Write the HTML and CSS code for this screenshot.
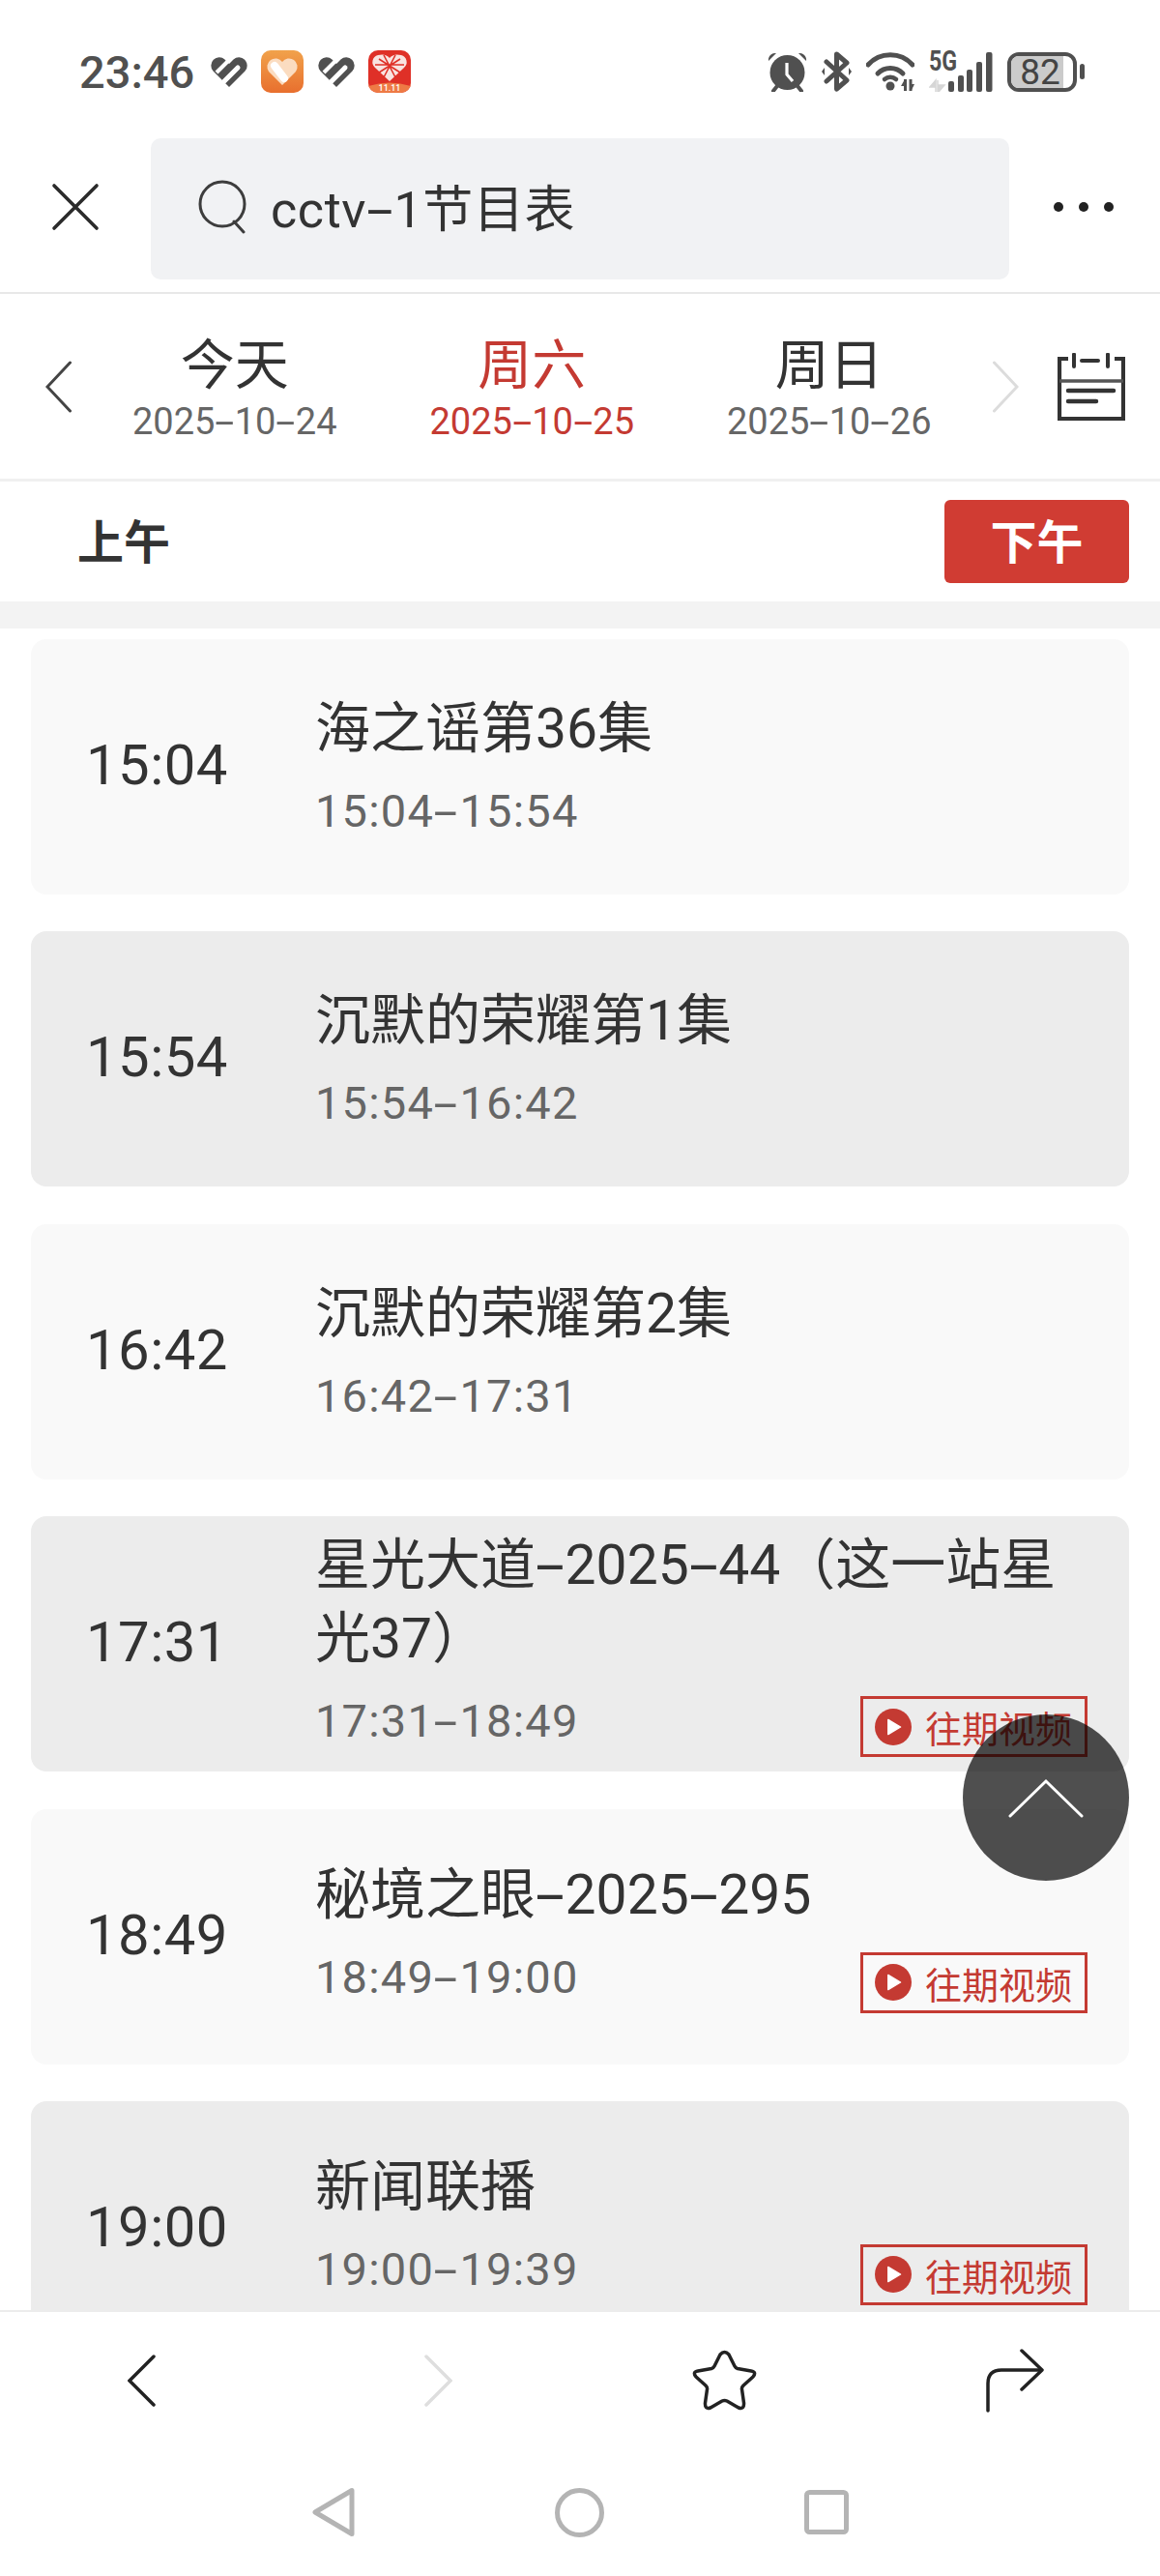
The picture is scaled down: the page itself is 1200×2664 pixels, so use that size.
FILE: index.html
```html
<!DOCTYPE html>
<html lang="zh-CN">
<head>
    <meta charset="UTF-8">
    <meta name="viewport" content="width=device-width, initial-scale=1.0">
    <title>cctv-1节目表</title>
    <link rel="stylesheet" href="styles.css">
</head>
<body>
<div class="phone">

    <div class="status-bar">
        <div class="status-left">
            <span class="clock">23:46</span>
            <svg class="heart" width="38" height="32" viewBox="0 0 38 32"><path d="M19 32 L2.5 15.5 A8.5 8.5 0 0 1 14.5 3.5 L19 8 L23.5 3.5 A8.5 8.5 0 0 1 35.5 15.5 Z" fill="#505050"/><path d="M6 17 L22 1" stroke="#fff" stroke-width="4"/><path d="M14 26 L28 12" stroke="#fff" stroke-width="5" stroke-linecap="round"/></svg>
            <svg class="app" width="44" height="44" viewBox="0 0 44 44"><defs><linearGradient id="og" x1="0" y1="0" x2="0" y2="1"><stop offset="0" stop-color="#f1a24b"/><stop offset="1" stop-color="#e86f2e"/></linearGradient></defs><rect width="44" height="44" rx="10" fill="url(#og)"/><path d="M22 36 L8 22 A8 8 0 0 1 22 12 A8 8 0 0 1 36 22 Z" fill="#fbdcc0"/><path d="M14 16 L24 29" stroke="#fff" stroke-width="8" stroke-linecap="round"/></svg>
            <svg class="heart" width="38" height="32" viewBox="0 0 38 32"><path d="M19 32 L2.5 15.5 A8.5 8.5 0 0 1 14.5 3.5 L19 8 L23.5 3.5 A8.5 8.5 0 0 1 35.5 15.5 Z" fill="#505050"/><path d="M6 17 L22 1" stroke="#fff" stroke-width="4"/><path d="M14 26 L28 12" stroke="#fff" stroke-width="5" stroke-linecap="round"/></svg>
            <svg class="app" width="44" height="44" viewBox="0 0 44 44"><rect width="44" height="44" rx="10" fill="#df3027"/><path d="M0 37 Q22 30 44 37 V34 A10 10 0 0 1 34 44 H10 A10 10 0 0 1 0 34Z" fill="#ee7a45"/><path d="M22 32 L7 18 A7.5 7.5 0 0 1 10 5 Q18 3 22 8 Q26 3 34 5 A7.5 7.5 0 0 1 37 18 Z" fill="#f9e3e0"/><path d="M11 9 L33 23 M33 9 L11 23 M16 5 L28 28 M28 5 L16 28 M7 15 H37" stroke="#df3027" stroke-width="1.6"/><text x="22" y="42" class="app-text" text-anchor="middle">11.11</text></svg>
        </div>
        <div class="status-right">
            <svg width="41" height="41" viewBox="0 0 41 41"><path d="M1 9 A7 7 0 0 1 9 1 Z M40 9 A7 7 0 0 0 32 1 Z" fill="#505050"/><circle cx="20.5" cy="21" r="18" fill="#505050"/><path d="M20 11 V23 L26 30" stroke="#fff" stroke-width="3.2" fill="none"/><path d="M6 40 L10 35 M35 40 L31 35" stroke="#505050" stroke-width="4" stroke-linecap="round"/></svg>
            <svg width="31" height="42" viewBox="0 0 31 42"><path d="M5 11 L26 30 L15.5 39 V3 L26 12 L5 31" stroke="#505050" stroke-width="5" fill="none" stroke-linejoin="round" stroke-linecap="round"/><path d="M0 21 L3 17 V25 Z M31 21 L28 17 V25 Z" fill="#505050"/></svg>
            <svg width="50" height="41" viewBox="0 0 50 41"><path d="M2 13 A31 31 0 0 1 48 13" stroke="#505050" stroke-width="5" fill="none" stroke-linecap="round"/><path d="M12 22 A18 18 0 0 1 38 22" stroke="#505050" stroke-width="5" fill="none" stroke-linecap="round"/><path d="M19 28 A9 9 0 0 1 31 28" stroke="#505050" stroke-width="4.5" fill="none" stroke-linecap="round"/><circle cx="25" cy="35" r="4.5" fill="#505050"/><path d="M40.5 28 V40 M46 28 V40" stroke="#505050" stroke-width="3"/><path d="M40 28 L36 35 H40 Z M46.5 40 L50 33 H46.5 Z" fill="#505050"/></svg>
            <div class="signal">
                <span class="net">5G</span>
                <svg width="66" height="42" viewBox="0 0 66 42"><path d="M7 30 L1 37 H7 Z M9 30 V42 M10 42 L16 35 H10 Z M7 37 V42" stroke="#d6d6d6" stroke-width="1.5" fill="#d6d6d6"/><rect x="20" y="31" width="6" height="11" rx="2" fill="#505050"/><rect x="30" y="25" width="6" height="17" rx="2" fill="#505050"/><rect x="39" y="19" width="6" height="23" rx="2" fill="#505050"/><rect x="49" y="11" width="6" height="31" rx="2" fill="#505050"/><rect x="59" y="1" width="6.5" height="41" rx="2" fill="#505050"/></svg>
            </div>
            <div class="battery-wrap">
                <div class="battery"><div class="batt-level"></div><span class="batt-num">82</span></div>
                <div class="batt-tip"></div>
            </div>
        </div>
    </div>

    <div class="search-row">
        <svg class="close-icon" width="50" height="50" viewBox="0 0 50 50"><path d="M3 3 L47 47 M47 3 L3 47" stroke="#2b2b2b" stroke-width="3.6" stroke-linecap="round"/></svg>
        <div class="search-box">
            <svg width="50" height="56" viewBox="0 0 50 56"><circle cx="25" cy="25" r="23" stroke="#3d3d3d" stroke-width="3" fill="none"/><path d="M37 43 L47 54" stroke="#3d3d3d" stroke-width="3" stroke-linecap="round"/></svg>
            <span class="search-text">cctv<span class="hy">-</span>1节目表</span>
        </div>
        <div class="more"><i></i><i></i><i></i></div>
    </div>

    <div class="date-row">
        <svg class="date-prev" width="27" height="54" viewBox="0 0 27 54"><path d="M25.5 2 L2 27 L25.5 52" stroke="#444" stroke-width="3" fill="none" stroke-linecap="round"/></svg>
        <div class="date-item">
            <div class="date-name">今天</div>
            <div class="date-num">2025<span class="hy">-</span>10<span class="hy">-</span>24</div>
        </div>
        <div class="date-item active">
            <div class="date-name">周六</div>
            <div class="date-num">2025<span class="hy">-</span>10<span class="hy">-</span>25</div>
        </div>
        <div class="date-item">
            <div class="date-name">周日</div>
            <div class="date-num">2025<span class="hy">-</span>10<span class="hy">-</span>26</div>
        </div>
        <svg class="date-next" width="27" height="54" viewBox="0 0 27 54"><path d="M1.5 2 L25 27 L1.5 52" stroke="#dcdcdc" stroke-width="3" fill="none" stroke-linecap="round"/></svg>
        <svg class="calendar" width="70" height="70" viewBox="0 0 70 70"><path d="M11 6 H2 V68 H68 V6 H59" stroke="#333" stroke-width="4.2" fill="none"/><path d="M17 1.5 V14 M52 1.5 V14" stroke="#333" stroke-width="4" stroke-linecap="round"/><path d="M25 8 H42" stroke="#333" stroke-width="4" stroke-linecap="round"/><path d="M2 29 H68" stroke="#555" stroke-width="3.5"/><path d="M11 39 H58 M11 50 H40" stroke="#333" stroke-width="4.5" stroke-linecap="round"/></svg>
    </div>

    <div class="period-row">
        <span class="period">上午</span>
        <span class="period-btn"><span>下午</span></span>
    </div>
    <div class="gray-bar"></div>

    <div class="program-list">
        <div class="program">
            <div class="start">15:04</div>
            <div class="info">
                <div class="title">海之谣第36集</div>
                <div class="range-row">
                    <div class="range">15:04<span class="hy">-</span>15:54</div>
                </div>
            </div>
        </div>
        <div class="program alt">
            <div class="start">15:54</div>
            <div class="info">
                <div class="title">沉默的荣耀第1集</div>
                <div class="range-row">
                    <div class="range">15:54<span class="hy">-</span>16:42</div>
                </div>
            </div>
        </div>
        <div class="program">
            <div class="start">16:42</div>
            <div class="info">
                <div class="title">沉默的荣耀第2集</div>
                <div class="range-row">
                    <div class="range">16:42<span class="hy">-</span>17:31</div>
                </div>
            </div>
        </div>
        <div class="program alt">
            <div class="start">17:31</div>
            <div class="info">
                <div class="title">星光大道<span class="hy">-</span>2025<span class="hy">-</span><span>44（这一站星</span><span>光37）</span></div>
                <div class="range-row">
                    <div class="range">17:31<span class="hy">-</span>18:49</div>
                    <div class="replay">
                        <svg width="38" height="38" viewBox="0 0 40 40"><circle cx="20" cy="20" r="20" fill="#c43a32"/><path d="M14.5 12 L28 20 L14.5 28 Z" fill="#fff" stroke="#fff" stroke-width="1.5" stroke-linejoin="round"/></svg>
                        往期视频
                    </div>
                </div>
            </div>
        </div>
        <div class="program">
            <div class="start">18:49</div>
            <div class="info">
                <div class="title">秘境之眼<span class="hy">-</span>2025<span class="hy">-</span>295</div>
                <div class="range-row">
                    <div class="range">18:49<span class="hy">-</span>19:00</div>
                    <div class="replay">
                        <svg width="38" height="38" viewBox="0 0 40 40"><circle cx="20" cy="20" r="20" fill="#c43a32"/><path d="M14.5 12 L28 20 L14.5 28 Z" fill="#fff" stroke="#fff" stroke-width="1.5" stroke-linejoin="round"/></svg>
                        往期视频
                    </div>
                </div>
            </div>
        </div>
        <div class="program alt">
            <div class="start">19:00</div>
            <div class="info">
                <div class="title">新闻联播</div>
                <div class="range-row">
                    <div class="range">19:00<span class="hy">-</span>19:39</div>
                    <div class="replay">
                        <svg width="38" height="38" viewBox="0 0 40 40"><circle cx="20" cy="20" r="20" fill="#c43a32"/><path d="M14.5 12 L28 20 L14.5 28 Z" fill="#fff" stroke="#fff" stroke-width="1.5" stroke-linejoin="round"/></svg>
                        往期视频
                    </div>
                </div>
            </div>
        </div>
    </div>

    <div class="up-btn">
        <svg width="78" height="41" viewBox="0 0 78 41"><path d="M2 39 L39 3 L76 39" stroke="#fff" stroke-width="3" fill="none" stroke-linecap="round"/></svg>
    </div>

    <div class="bottom-nav">
        <div class="nav-item nav-back"><svg width="29" height="54" viewBox="0 0 29 54"><path d="M27 2 L2 27 L27 52" stroke="#222" stroke-width="3.5" fill="none" stroke-linecap="round"/></svg></div>
        <div class="nav-item nav-forward"><svg width="29" height="54" viewBox="0 0 29 54"><path d="M2 2 L27 27 L2 52" stroke="#dedede" stroke-width="3.5" fill="none" stroke-linecap="round"/></svg></div>
        <div class="nav-item"><svg width="68" height="64" viewBox="0 0 68 64"><path d="M29 5 Q33.5 0 38 5 L44 17 Q45 19 47 19.5 L61 22 Q67 23 63 28 L53 37 Q51 39 51.5 41 L53.5 55 Q54 62 48 60 L36 53 Q33.5 52 31 53 L19 60 Q13 62 13.5 55 L15.5 41 Q16 39 14 37 L4 28 Q0 23 6 22 L20 19.5 Q22 19 23 17 Z" stroke="#222" stroke-width="3.5" fill="none" stroke-linejoin="round"/></svg></div>
        <div class="nav-item"><svg width="60" height="66" viewBox="0 0 60 66"><path d="M2 64 V36 Q2 22 16 22 H57" stroke="#222" stroke-width="3.5" fill="none" stroke-linecap="round"/><path d="M37 2 L58 22 L37 42" stroke="#222" stroke-width="3.5" fill="none" stroke-linecap="round" stroke-linejoin="round"/></svg></div>
    </div>

    <div class="system-nav">
        <svg width="44" height="52" viewBox="0 0 44 52"><path d="M41 3.5 V48.5 L3 26 Z" stroke="#b4b4b4" stroke-width="5" fill="none" stroke-linejoin="round"/></svg>
        <svg width="51" height="51" viewBox="0 0 51 51"><circle cx="25.5" cy="25.5" r="23" stroke="#b4b4b4" stroke-width="5" fill="none"/></svg>
        <svg width="46" height="46" viewBox="0 0 46 46"><rect x="2.5" y="2.5" width="41" height="41" rx="3" stroke="#b4b4b4" stroke-width="5" fill="none"/></svg>
    </div>

</div>
</body>
</html>
```

FILE: styles.css
```css
* {
    box-sizing: border-box;
}

html, body {
    margin: 0;
    padding: 0;
    background: #fff;
}

body {
    font-family: "Roboto", "Noto Sans CJK SC", sans-serif;
    color: #333;
}

.phone {
    position: relative;
    width: 1200px;
    height: 2664px;
    display: flex;
    flex-direction: column;
    overflow: hidden;
}

/* long dash of the original font */
.hy {
    display: inline-block;
    margin: 0 0.13em;
    transform: scaleX(1.9);
}

/* status bar */
.status-bar {
    height: 143px;
    flex: none;
    display: flex;
    justify-content: space-between;
    align-items: flex-start;
    padding: 52px 78px 0 82px;
}

.status-left, .status-right {
    display: flex;
    align-items: center;
    height: 44px;
}

.clock {
    font-size: 47px;
    font-weight: 500;
    color: #505050;
    margin-right: 17px;
}

.heart {
    margin-right: 14px;
}

.app {
    margin-right: 15px;
}

.app-text {
    font-size: 9px;
    font-weight: 500;
    fill: #fff;
}

.status-right {
    gap: 15px;
}

.signal {
    position: relative;
    display: flex;
}

.net {
    position: absolute;
    left: 0;
    top: -7px;
    font-size: 29px;
    font-weight: 700;
    color: #505050;
    transform: scaleX(0.8);
    transform-origin: left center;
}

.battery-wrap {
    display: flex;
    align-items: center;
    gap: 3px;
}

.battery {
    position: relative;
    width: 72px;
    height: 41px;
    border: 4px solid #505050;
    border-radius: 12px;
    overflow: hidden;
    display: flex;
    align-items: center;
    justify-content: center;
}

.batt-level {
    position: absolute;
    left: 0;
    top: 0;
    bottom: 0;
    width: 84%;
    background: #cbcbcb;
}

.batt-num {
    position: relative;
    font-size: 37px;
    margin-right: 4px;
    color: #444;
}

.batt-tip {
    width: 5px;
    height: 16px;
    background: #505050;
    border-radius: 3px;
}

/* search */
.search-row {
    height: 161px;
    flex: none;
    display: flex;
    align-items: flex-start;
    border-bottom: 2px solid #e8e8e8;
}

.close-icon {
    margin: 46px 54px 0 53px;
    flex: none;
}

.search-box {
    width: 888px;
    height: 146px;
    margin-left: -1px;
    background: #f1f2f4;
    border-radius: 10px;
    display: flex;
    align-items: center;
    padding: 0 0 4px 49px;
}

.search-text {
    font-size: 52px;
    letter-spacing: 0.6px;
    margin: 0 0 4px 25px;
    color: #333;
}

.more {
    display: flex;
    gap: 16px;
    margin: 66px 0 0 46px;
}

.more i {
    width: 10px;
    height: 10px;
    border-radius: 50%;
    background: #222;
}

/* dates */
.date-row {
    height: 194px;
    flex: none;
    display: flex;
    align-items: center;
    border-bottom: 3px solid #f0f0f0;
    padding-left: 47px;
}

.date-prev {
    margin-right: 15px;
    flex: none;
}

.date-next {
    margin-left: 15px;
    flex: none;
}

.date-item {
    width: 307.5px;
    text-align: center;
    flex: none;
    margin-top: 7px;
}

.date-name {
    font-size: 56px;
    line-height: 66px;
    color: #333;
}

.date-num {
    font-size: 38px;
    line-height: 50px;
    color: #666;
}

.date-item.active .date-name,
.date-item.active .date-num {
    color: #c43a32;
}

.calendar {
    margin-left: 40px;
    flex: none;
}

/* am pm */
.period-row {
    height: 124px;
    flex: none;
    display: flex;
    align-items: center;
    justify-content: space-between;
    padding: 0 32px 0 80px;
}

.period {
    font-size: 48px;
    font-weight: 700;
    color: #333;
    margin-bottom: 6px;
}

.period-btn {
    width: 191px;
    height: 86px;
    background: #d03c33;
    border-radius: 6px;
    color: #fff;
    font-size: 48px;
    font-weight: 700;
    display: flex;
    align-items: center;
    justify-content: center;
    padding-bottom: 6px;
}

.gray-bar {
    height: 28px;
    flex: none;
    background: #f3f3f3;
}

/* list */
.program-list {
    flex: 1;
    overflow: hidden;
    padding: 11px 32px 0;
    display: flex;
    flex-direction: column;
    gap: 38.4px;
    min-height: 0;
}

.program {
    flex: none;
    height: 264px;
    display: flex;
    align-items: center;
    background: #f9f9f9;
    border-radius: 16px;
}

.program.alt {
    background: #ececec;
}

.start {
    width: 294px;
    flex: none;
    padding: 0 0 4px 57px;
    font-size: 58px;
    letter-spacing: 0.5px;
    color: #333;
}

.info {
    flex: 1;
    padding: 0 43px 2px 0;
}

.title {
    font-size: 57px;
    line-height: 76px;
    color: #333;
}

.range-row {
    display: flex;
    justify-content: space-between;
    align-items: flex-start;
    margin-top: 18px;
}

.range {
    font-size: 47px;
    line-height: 58px;
    letter-spacing: 1.2px;
    color: #666;
}

.replay {
    width: 235px;
    height: 63px;
    margin-top: 3px;
    padding-left: 12px;
    border: 3px solid #c43a32;
    display: flex;
    align-items: center;
    gap: 14px;
    font-size: 38px;
    color: #c43a32;
}

/* floating button */
.up-btn {
    position: absolute;
    left: 996px;
    top: 1773px;
    width: 172px;
    height: 172px;
    border-radius: 50%;
    background: rgba(0, 0, 0, 0.69);
    display: flex;
    align-items: center;
    justify-content: center;
}

/* bottom */
.bottom-nav {
    height: 143px;
    flex: none;
    background: #fff;
    border-top: 2px solid #ececec;
    display: flex;
    align-items: center;
}

.nav-item {
    flex: 1;
    display: flex;
    justify-content: center;
}

.nav-back svg {
    margin-right: 7px;
}

.nav-forward svg {
    margin-left: 6px;
}

.system-nav {
    height: 132px;
    flex: none;
    background: #fff;
    display: flex;
    align-items: center;
    justify-content: center;
    gap: 207px;
}
```
